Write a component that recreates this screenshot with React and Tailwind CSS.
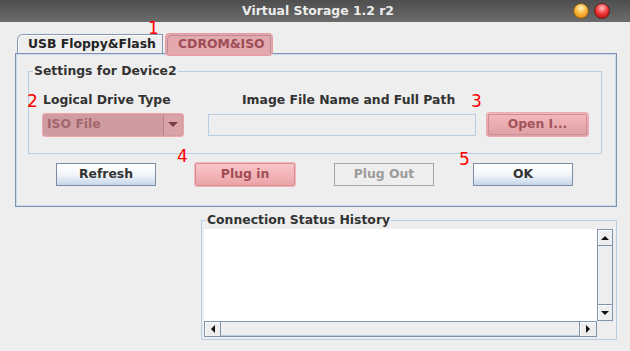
import React from 'react'

// Metal-look dialog with red annotation markers over it
function Button({ children, kind = 'normal' }) {
  if (kind === 'pink') {
    return (
      <button className="w-[100px] h-[23px] rounded-[2px] border border-[#d48e94] bg-linear-to-b from-[#f9c6c9] to-[#eba4a9] shadow-[0_0_0_1px_#f4b6ba] text-[12.4px] font-bold text-[#a24c55] leading-none">
        {children}
      </button>
    )
  }
  if (kind === 'disabled') {
    return (
      <button className="w-[100px] h-[23px] border border-[#a4a4a4] bg-[#eeeeee] text-[12.4px] font-bold text-[#9c9c9c] leading-none">
        {children}
      </button>
    )
  }
  return (
    <button className="w-[100px] h-[23px] border border-[#7b8ca4] bg-linear-to-b from-white via-[#f2f6fa] to-[#c6d7ea] text-[12.4px] font-bold text-[#333333] leading-none">
      {children}
    </button>
  )
}

function Marker({ n, pos }) {
  return (
    <span className={`absolute ${pos} text-[17px] leading-none text-[#ff0000] font-normal`}>{n}</span>
  )
}

function ScrollBtn({ dir }) {
  const tri = {
    up: 'border-x-[4px] border-x-transparent border-b-[4px] border-b-[#111]',
    down: 'border-x-[4px] border-x-transparent border-t-[4px] border-t-[#111]',
    left: 'border-y-[4px] border-y-transparent border-r-[4px] border-r-[#111]',
    right: 'border-y-[4px] border-y-transparent border-l-[4px] border-l-[#111]',
  }[dir]
  return (
    <div className="w-full h-full flex items-center justify-center bg-[#eeeeee] shadow-[inset_1px_1px_0_#ffffff]">
      <div className={`w-0 h-0 ${tri}`} />
    </div>
  )
}

export default function App() {
  return (
    <div className="relative w-[630px] h-[351px] overflow-hidden bg-[#eeeeee] font-['DejaVu_Sans',Verdana,sans-serif] text-[#333333] flex flex-col">
      {/* title bar */}
      <div className="h-[22px] shrink-0 grid grid-cols-[60px_1fr_60px] items-center bg-linear-to-b from-[#4e4e4e] to-[#6c6c6c]">
        <div />
        <div className="text-center pl-[6px] text-[12.4px] font-bold text-[#ececec] leading-none">Virtual Storage 1.2 r2</div>
        <div className="flex items-center gap-[5px] pl-[3px]">
          <span className="w-[16px] h-[16px] rounded-full border border-[#7a5420] bg-[radial-gradient(circle_at_50%_30%,#fff3c0_0%,#f8b83c_45%,#d97c00_100%)]" />
          <span className="w-[16px] h-[16px] rounded-full border border-[#661c1c] bg-[radial-gradient(circle_at_50%_30%,#ffc4c4_0%,#f23c3c_45%,#b40000_100%)]" />
        </div>
      </div>

      <div className="pt-[11px] pl-[15px] flex flex-col">
        {/* tabs */}
        <div className="h-[20px] flex items-end pl-[2px] gap-[2px]">
          <div className="w-[146px] h-[19px] border-t border-l border-r border-[#8397b2] rounded-tl-[6px] bg-[#eeeeee] shadow-[inset_1px_1px_0_#ffffff] flex items-center pl-[10px] text-[12.4px] font-bold leading-none text-[#222]">
            USB Floppy&amp;Flash
          </div>
          <div className="relative z-10 w-[108px] h-[23px] -mb-[3px] rounded-[4px] border border-[#e89ca2] bg-[#e3a9ae] flex items-start pt-[1px] px-[1px]">
            <div className="w-full h-[18px] border-t border-l border-r border-[#b98c97] rounded-tl-[5px] flex items-center pl-[10px] text-[12.4px] font-bold leading-none text-[#9e4d56]">
              CDROM&amp;ISO
            </div>
          </div>
        </div>

        {/* tab panel */}
        <div className="w-[602px] h-[154px] border border-[#8094b1]">
          <div className="h-full border border-[#c8dbee] flex flex-col">
            <div className="ml-[11px] mt-[16px] w-[574px] border border-[#b9cfe6] flex flex-col">
              <span className="-mt-[9px] ml-[4px] w-fit px-[1px] bg-[#eeeeee] text-[12.4px] font-bold leading-[16px]">Settings for Device2</span>
              <div className="mt-[13px] pl-[13px] grid grid-cols-[142px_268px_103px] gap-x-[24px] text-[12.4px] font-bold leading-[16px]">
                <span className="pl-[1px]">Logical Drive Type</span>
                <span className="pl-[34px] whitespace-nowrap">Image File Name and Full Path</span>
                <span />
              </div>
              <div className="mt-[4px] mb-[16px] pl-[13px] h-[25px] flex items-center">
                <div className="w-[142px] h-[24px] rounded-[3px] border border-[#efa9ae] bg-[#cf9ca1] p-[1px] flex">
                  <div className="flex-1 flex items-center pl-[3px] text-[12.4px] font-bold text-[#a2666d] leading-none">ISO File</div>
                  <div className="w-[19px] border-l border-[#b7868c] bg-[#d9a3a8] flex items-center justify-center">
                    <div className="w-0 h-0 border-x-[5px] border-x-transparent border-t-[5px] border-t-[#7c3c44]" />
                  </div>
                </div>
                <div className="ml-[24px] w-[268px] h-[22px] border border-[#b9cfe6] bg-[#eeeeee]" />
                <div className="ml-[10px] w-[103px] h-[25px] rounded-[3px] border border-[#eeaab0] bg-linear-to-b from-[#f6b9bd] to-[#dea0a5] p-[1px]">
                  <div className="w-full h-full border border-[#c99096] rounded-[1px] flex items-center justify-center text-[12.4px] font-bold text-[#a2525b] leading-none">Open I...</div>
                </div>
              </div>
            </div>

            <div className="mt-[9px] ml-[39px] flex gap-[39px]">
              <Button>Refresh</Button>
              <Button kind="pink">Plug in</Button>
              <Button kind="disabled">Plug Out</Button>
              <Button>OK</Button>
            </div>
          </div>
        </div>

        {/* history */}
        <div className="mt-[13px] ml-[186px] w-[416px] h-[120px] border border-[#b9cfe6] flex flex-col">
          <span className="-mt-[9px] ml-[4px] w-fit px-[1px] bg-[#eeeeee] text-[12.4px] font-bold leading-[16px]">Connection Status History</span>
          <div className="mt-[1px] ml-[2px] w-[409px] grid grid-cols-[393px_16px] grid-rows-[92px_16px]">
            <div className="bg-white" />
            <div className="border border-[#8094ad] flex flex-col bg-[#eeeeee]">
              <div className="h-[16px] border-b border-[#8094ad]"><ScrollBtn dir="up" /></div>
              <div className="flex-1" />
              <div className="h-[16px] border-t border-[#8094ad]"><ScrollBtn dir="down" /></div>
            </div>
            <div className="border border-[#8094ad] flex bg-[#eeeeee]">
              <div className="w-[16px] border-r border-[#8094ad]"><ScrollBtn dir="left" /></div>
              <div className="flex-1 border-b border-[#b9cfe6]" />
              <div className="w-[17px] border-l border-[#8094ad]"><ScrollBtn dir="right" /></div>
            </div>
            <div />
          </div>
        </div>
      </div>

      {/* annotation markers */}
      <Marker n="1" pos="left-[148px] top-[20px]" />
      <Marker n="2" pos="left-[27px] top-[93px]" />
      <Marker n="3" pos="left-[471px] top-[93px]" />
      <Marker n="4" pos="left-[177px] top-[148px]" />
      <Marker n="5" pos="left-[459px] top-[151px]" />
    </div>
  )
}
